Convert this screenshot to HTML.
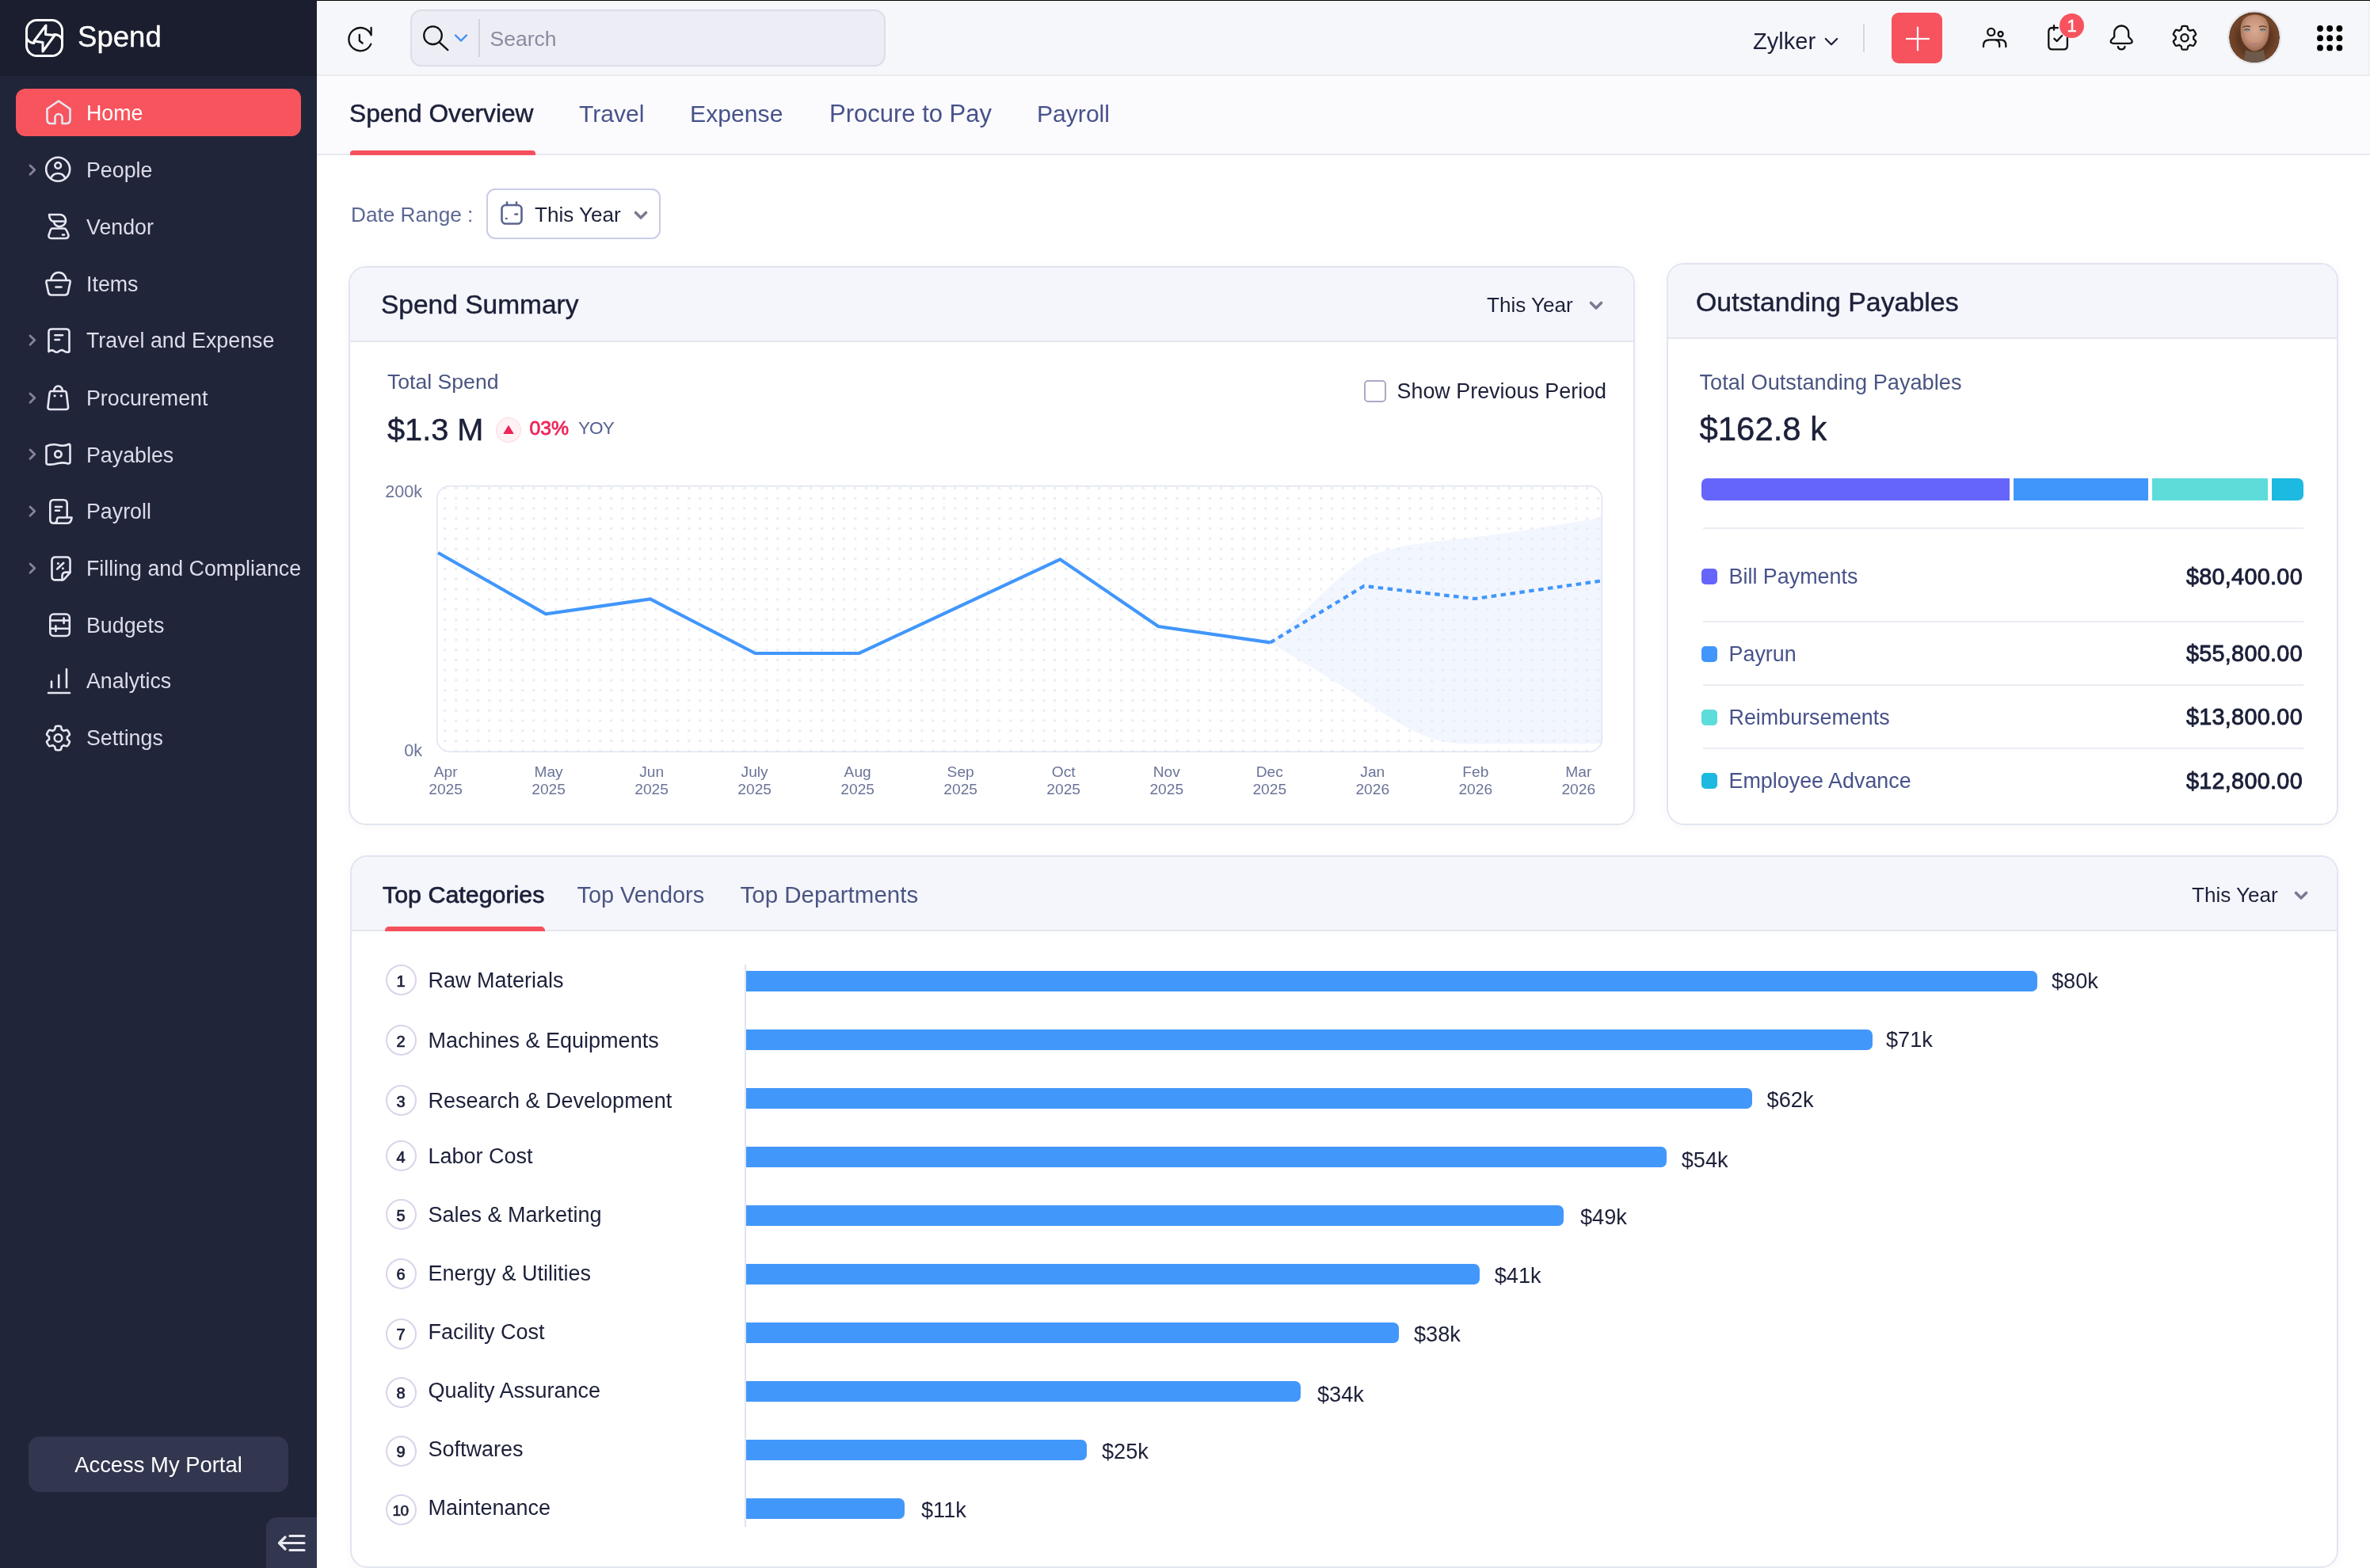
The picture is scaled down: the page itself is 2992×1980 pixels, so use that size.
<!DOCTYPE html><html><head><meta charset="utf-8"><style>
html,body{margin:0;padding:0;width:2992px;height:1980px;overflow:hidden;background:#fff;}
body{position:relative;font-family:"Liberation Sans",sans-serif;}
.a{position:absolute;box-sizing:border-box;}
.t{position:absolute;white-space:nowrap;line-height:1;}
#root{position:absolute;left:0;top:0;width:2992px;height:1980px;overflow:hidden;will-change:transform;}
.m{-webkit-text-stroke:0.6px currentColor;}
</style></head><body><div id="root">
<div class="a" style="left:400px;top:0px;width:2592px;height:96px;background:#f6f7fb;"></div>
<div class="a" style="left:400px;top:0px;width:2592px;height:1px;background:#000;"></div>
<div class="a" style="left:400px;top:1px;width:2592px;height:1px;background:#fff;"></div>
<div class="a" style="left:400px;top:1px;width:1px;height:93px;background:#fff;"></div>
<div class="a" style="left:400px;top:94px;width:2592px;height:2px;background:#ebebed;"></div>
<div class="a" style="left:2990px;top:1px;width:1px;height:93px;background:#ececee;"></div>
<div class="a" style="left:400px;top:96px;width:2592px;height:100px;background:#fbfbfe;"></div>
<div class="a" style="left:400px;top:194px;width:2592px;height:2px;background:#e8e8f3;"></div>
<div class="a" style="left:0px;top:0px;width:400px;height:96px;background:#1b1e2f;"></div>
<div class="a" style="left:0px;top:96px;width:400px;height:1884px;background:#212539;"></div>
<svg class="a" style="left:30px;top:22px;" width="52" height="52" viewBox="0 0 52 52"><g fill="none" stroke="#fff" stroke-width="3" stroke-linejoin="round" stroke-linecap="round">
<rect x="3.5" y="3.5" width="45" height="45" rx="13"/>
<path d="M28 10 L13 30 L24 31.5 L24 43 L39 22.5 L27.5 21.5 Z"/>
<path d="M4.5 27.5 Q7 32 13 32.5"/><path d="M38.5 21.5 Q46 22 48 27"/>
</g></svg>
<div class="t" style="left:98.00px;top:29.32px;font-size:36.6px;color:#ffffff;-webkit-text-stroke:0.35px #fff;">Spend</div>
<div class="a" style="left:20px;top:112px;width:360px;height:60px;background:#f7545e;border-radius:12px;"></div>
<div class="t" style="left:109.00px;top:129.51px;font-size:26.8px;color:#ffffff;">Home</div>
<div class="t" style="left:109.00px;top:202.11px;font-size:26.8px;color:#dcdcea;">People</div>
<svg class="a" style="left:33px;top:204.8px;" width="16" height="20" viewBox="0 0 16 20"><path d="M5 4 L10.8 9.6 L5 15.2" fill="none" stroke="#86839d" stroke-width="2.8" stroke-linecap="round" stroke-linejoin="round"/></svg>
<div class="t" style="left:109.00px;top:273.91px;font-size:26.8px;color:#dcdcea;">Vendor</div>
<div class="t" style="left:109.00px;top:345.61px;font-size:26.8px;color:#dcdcea;">Items</div>
<div class="t" style="left:109.00px;top:417.31px;font-size:26.8px;color:#dcdcea;">Travel and Expense</div>
<svg class="a" style="left:33px;top:420px;" width="16" height="20" viewBox="0 0 16 20"><path d="M5 4 L10.8 9.6 L5 15.2" fill="none" stroke="#86839d" stroke-width="2.8" stroke-linecap="round" stroke-linejoin="round"/></svg>
<div class="t" style="left:109.00px;top:489.81px;font-size:26.8px;color:#dcdcea;">Procurement</div>
<svg class="a" style="left:33px;top:492.5px;" width="16" height="20" viewBox="0 0 16 20"><path d="M5 4 L10.8 9.6 L5 15.2" fill="none" stroke="#86839d" stroke-width="2.8" stroke-linecap="round" stroke-linejoin="round"/></svg>
<div class="t" style="left:109.00px;top:561.61px;font-size:26.8px;color:#dcdcea;">Payables</div>
<svg class="a" style="left:33px;top:564.3px;" width="16" height="20" viewBox="0 0 16 20"><path d="M5 4 L10.8 9.6 L5 15.2" fill="none" stroke="#86839d" stroke-width="2.8" stroke-linecap="round" stroke-linejoin="round"/></svg>
<div class="t" style="left:109.00px;top:633.31px;font-size:26.8px;color:#dcdcea;">Payroll</div>
<svg class="a" style="left:33px;top:636px;" width="16" height="20" viewBox="0 0 16 20"><path d="M5 4 L10.8 9.6 L5 15.2" fill="none" stroke="#86839d" stroke-width="2.8" stroke-linecap="round" stroke-linejoin="round"/></svg>
<div class="t" style="left:109.00px;top:705.11px;font-size:26.8px;color:#dcdcea;">Filling and Compliance</div>
<svg class="a" style="left:33px;top:707.8px;" width="16" height="20" viewBox="0 0 16 20"><path d="M5 4 L10.8 9.6 L5 15.2" fill="none" stroke="#86839d" stroke-width="2.8" stroke-linecap="round" stroke-linejoin="round"/></svg>
<div class="t" style="left:109.00px;top:776.81px;font-size:26.8px;color:#dcdcea;">Budgets</div>
<div class="t" style="left:109.00px;top:847.01px;font-size:26.8px;color:#dcdcea;">Analytics</div>
<div class="t" style="left:109.00px;top:918.71px;font-size:26.8px;color:#dcdcea;">Settings</div>
<svg class="a" style="left:0;top:0" width="400" height="1000" viewBox="0 0 400 1000"><g fill="none" stroke="#e6e7f2" stroke-width="2.6" stroke-linecap="round" stroke-linejoin="round">
<path d="M59.5 137.5 L74 127.5 L88.5 137.5 V151 Q88.5 156 83.5 156 H78.5 V148.5 A4.5 4.5 0 0 0 69.5 148.5 V156 H64.5 Q59.5 156 59.5 151 Z"/>
<circle cx="73.2" cy="213.8" r="15"/><circle cx="73.2" cy="209" r="3.8"/><path d="M64.5 224.5 A9.5 9 0 0 1 82 224.5"/>
<path d="M62 271 H76 A7.5 7.5 0 0 1 80.5 284 A7.5 7.5 0 0 1 68 280 Q62.5 279 62 271 Z"/><path d="M67.5 279.5 H81"/>
<path d="M66 288.5 H81 Q83 288.5 85 293 L86.5 297 Q86.5 301 82.5 301 H65 Q61 301 61.5 297 L63 293 Q64 288.5 66 288.5 Z"/><path d="M79 296.5 H81"/>
<path d="M64.5 354 A9.5 10 0 0 1 83.5 354"/><path d="M60 354 H87.5 Q89 354 88.5 357 L86 369 Q85.5 372.5 82 372.5 H65 Q61.5 372.5 61 369 L58.5 357 Q58 354 60 354 Z"/><path d="M70.5 362.5 H77.5"/>
<path d="M61.5 444 V419 Q61.5 415.5 65.5 415.5 H83 Q87.5 415.5 87.5 419 V444 Q84 446 80.5 443 Q77.5 441 74.5 443.5 Q71.5 446 68.5 443.5 Q65 441 61.5 444 Z"/><path d="M69.5 423.2 H79"/><path d="M69.5 429 H75"/>
<path d="M68 494 A5.5 6.5 0 0 1 79 494"/><path d="M64.5 494 H82 Q83.5 494 84 497 L86 513.5 Q86.5 517 83 517 H63.5 Q60 517 60.5 513.5 L62.5 497 Q63 494 64.5 494 Z"/>
<path d="M58.5 563.5 Q66 560 73.5 562 Q81 564 86.5 561 Q88.5 560.5 88.5 563 V583 Q88.5 585.5 86 585.5 Q80 583.5 73.5 585 Q66 587 60.5 586.5 Q58.5 586.5 58.5 584 Z"/><circle cx="73.4" cy="573.6" r="4.2"/>
<path d="M84.7 652.5 V636 Q84.7 631.3 80 631.3 H68 Q63.3 631.3 63.3 636 V656 Q63.3 660.7 68 660.7 H85 Q89.8 660.7 90.6 653.5 H74 Q72 653.5 72 656 Q72 660.7 67.5 660.7"/><path d="M70 640 H78"/><path d="M70 644.8 H75"/>
<path d="M79.5 732.4 H70 Q65.5 732.4 65.5 727.9 V708 Q65.5 703.5 70 703.5 H84 Q88.5 703.5 88.5 708 V723.2 L81 731.4 Q80.2 732.4 79 732.4"/><path d="M88.2 722.6 H83.2 Q78.5 722.6 78.5 727.3 V732.2"/><path d="M72.2 718.5 L80.3 710.8"/>
<rect x="63.3" y="775.5" width="24.5" height="27.5" rx="4.5"/><path d="M63.5 783.5 H87.5"/><path d="M63.5 793.8 H87.5"/><path d="M80.6 780.5 V787"/><path d="M70.4 790.5 V797"/>
<path d="M65 860.5 V868"/><path d="M74.2 852.5 V868"/><path d="M84 845 V868"/><path d="M61 875 H88"/>
<circle cx="73.5" cy="932" r="4.8"/>
</g></svg>
<svg class="a" style="left:0;top:0" width="400" height="1000"><g fill="#e6e7f2"><circle cx="69.1" cy="499.8" r="1.6"/><circle cx="77.3" cy="499.8" r="1.6"/><circle cx="73.4" cy="711.6" r="1.5"/><circle cx="79.4" cy="717.7" r="1.5"/></g></svg>
<svg class="a" style="left:0;top:0" width="400" height="1000" viewBox="0 0 400 1000"><g fill="none" stroke="#e6e7f2" stroke-width="2.6" stroke-linecap="round" stroke-linejoin="round"><path d="M73.50 916.80 L74.16 916.81 L74.82 916.86 L75.48 916.93 L76.14 917.03 L76.79 917.16 L77.19 918.21 L77.50 919.30 L77.72 920.40 L77.90 921.38 L78.36 921.58 L78.81 921.80 L79.25 922.04 L79.68 922.30 L80.10 922.58 L80.50 922.88 L81.44 922.54 L82.49 922.19 L83.59 921.91 L84.71 921.73 L85.14 922.23 L85.56 922.75 L85.95 923.28 L86.32 923.83 L86.66 924.40 L86.98 924.98 L87.28 925.58 L87.54 926.18 L87.78 926.80 L88.00 927.43 L87.29 928.31 L86.50 929.12 L85.66 929.86 L84.90 930.50 L84.96 931.00 L84.99 931.50 L85.00 932.00 L84.99 932.50 L84.96 933.00 L84.90 933.50 L85.66 934.14 L86.50 934.88 L87.29 935.69 L88.00 936.57 L87.78 937.20 L87.54 937.82 L87.28 938.42 L86.98 939.02 L86.66 939.60 L86.32 940.17 L85.95 940.72 L85.56 941.25 L85.14 941.77 L84.71 942.27 L83.59 942.09 L82.49 941.81 L81.44 941.46 L80.50 941.12 L80.10 941.42 L79.68 941.70 L79.25 941.96 L78.81 942.20 L78.36 942.42 L77.90 942.62 L77.72 943.60 L77.50 944.70 L77.19 945.79 L76.79 946.84 L76.14 946.97 L75.48 947.07 L74.82 947.14 L74.16 947.19 L73.50 947.20 L72.84 947.19 L72.18 947.14 L71.52 947.07 L70.86 946.97 L70.21 946.84 L69.81 945.79 L69.50 944.70 L69.28 943.60 L69.10 942.62 L68.64 942.42 L68.19 942.20 L67.75 941.96 L67.32 941.70 L66.90 941.42 L66.50 941.12 L65.56 941.46 L64.51 941.81 L63.41 942.09 L62.29 942.27 L61.86 941.77 L61.44 941.25 L61.05 940.72 L60.68 940.17 L60.34 939.60 L60.02 939.02 L59.72 938.42 L59.46 937.82 L59.22 937.20 L59.00 936.57 L59.71 935.69 L60.50 934.88 L61.34 934.14 L62.10 933.50 L62.04 933.00 L62.01 932.50 L62.00 932.00 L62.01 931.50 L62.04 931.00 L62.10 930.50 L61.34 929.86 L60.50 929.12 L59.71 928.31 L59.00 927.43 L59.22 926.80 L59.46 926.18 L59.72 925.58 L60.02 924.98 L60.34 924.40 L60.68 923.83 L61.05 923.28 L61.44 922.75 L61.86 922.23 L62.29 921.73 L63.41 921.91 L64.51 922.19 L65.56 922.54 L66.50 922.88 L66.90 922.58 L67.32 922.30 L67.75 922.04 L68.19 921.80 L68.64 921.58 L69.10 921.38 L69.28 920.40 L69.50 919.30 L69.81 918.21 L70.21 917.16 L70.86 917.03 L71.52 916.93 L72.18 916.86 L72.84 916.81 L73.50 916.80 Z"/></g></svg>
<div class="a" style="left:36px;top:1814px;width:328px;height:70px;background:#33364f;border-radius:14px;"></div>
<div class="t" style="left:94.18px;top:1835.81px;font-size:27.4px;color:#ffffff;">Access My Portal</div>
<div class="a" style="left:336px;top:1916px;width:64px;height:64px;background:#33364f;border-radius:14px 0 0 0;"></div>
<svg class="a" style="left:340px;top:1930px;" width="56" height="40" viewBox="0 0 56 40"><g fill="none" stroke="#e8e8f0" stroke-width="3.2" stroke-linecap="round" stroke-linejoin="round"><path d="M26 9.5 H44"/><path d="M13 18.5 H44"/><path d="M26 27.5 H44"/><path d="M20 11 L12.5 18.5 L20 26"/></g></svg>
<div class="a" style="left:518px;top:12px;width:600px;height:72px;background:#ededf5;border:2px solid #dcdde7;border-radius:14px;"></div>
<svg class="a" style="left:0;top:0" width="700" height="96" viewBox="0 0 700 96"><g fill="none" stroke="#111" stroke-width="2.3" stroke-linecap="round" stroke-linejoin="round"><path d="M468.6 35 V44.4 A14.6 14.6 0 1 0 468.3 55.6"/><path d="M453.8 44 V51.5 L457.6 54.5"/><circle cx="546.5" cy="44.7" r="11.3"/><path d="M555.2 53.8 L565.3 63.2"/></g><path d="M575 44.5 L582 51.5 L589 44.5" fill="none" stroke="#3d8ef8" stroke-width="2.4" stroke-linecap="round" stroke-linejoin="round"/></svg>
<div class="a" style="left:604px;top:24px;width:2px;height:48px;background:#d3d4de;"></div>
<div class="t" style="left:618.50px;top:35.77px;font-size:26.5px;color:#8b8aa0;">Search</div>
<div class="t" style="left:2213.00px;top:37.77px;font-size:29.1px;color:#1c2039;">Zylker</div>
<svg class="a" style="left:2300px;top:44px;" width="24" height="18" viewBox="0 0 24 18"><path d="M4.8 5 L12 12.2 L19.2 5" fill="none" stroke="#1c2039" stroke-width="2.2" stroke-linecap="round" stroke-linejoin="round"/></svg>
<div class="a" style="left:2352px;top:30px;width:2px;height:36px;background:#d6d7df;"></div>
<div class="a" style="left:2388px;top:16px;width:64px;height:64px;background:#f6535e;border-radius:9px;"></div>
<svg class="a" style="left:2388px;top:16px;" width="64" height="64" viewBox="0 0 64 64"><g stroke="#fff" stroke-width="2.2" stroke-linecap="butt"><path d="M33 17.8 V48.2"/><path d="M18 33 H48"/></g></svg>
<svg class="a" style="left:0;top:0" width="2992" height="100" viewBox="0 0 2992 100"><g fill="none" stroke="#111" stroke-width="2.3" stroke-linecap="round" stroke-linejoin="round"><circle cx="2513.7" cy="40.4" r="4.5"/><circle cx="2525.6" cy="43" r="3"/><path d="M2504 59 V57.5 Q2504 50.3 2511.5 50.3 H2526 Q2532.3 50.3 2532.3 57 V59"/><path d="M2520 50.6 Q2524.2 51.5 2524.2 56.5 V59"/><path d="M2593 35.2 H2591 Q2586.3 35.2 2586.3 40 V57.8 Q2586.3 62.4 2591 62.4 H2605.3 Q2609.9 62.4 2609.9 57.8 V48"/><path d="M2593 32.2 V37.8"/><path d="M2590.3 35.2 H2597.8"/><path d="M2593.4 48.8 L2596.7 52 L2603.2 45"/></g></svg>
<div class="a" style="left:2600px;top:16.8px;width:31px;height:31px;border-radius:50%;background:#f6535e;"></div>
<div class="t" style="left:2609.38px;top:22.38px;font-size:22px;color:#fff;-webkit-text-stroke:0.5px #fff;">1</div>
<svg class="a" style="left:0;top:0" width="2992" height="100" viewBox="0 0 2992 100"><g fill="none" stroke="#111" stroke-width="2.3" stroke-linecap="round" stroke-linejoin="round"><path d="M2669.2 46.5 V41.5 A9 9 0 0 1 2687.2 41.5 V46.5 L2690.8 50.3 Q2692.6 52.6 2690.8 54 Q2690 54.8 2688.5 54.8 H2667.9 Q2666.4 54.8 2665.6 54 Q2663.8 52.6 2665.6 50.3 Z"/><path d="M2673.9 58.9 A4.4 4.4 0 0 0 2682.5 58.9"/><path d="M2758.00 32.90 L2758.65 32.91 L2759.30 32.96 L2759.94 33.03 L2760.59 33.13 L2761.22 33.25 L2761.62 34.28 L2761.93 35.34 L2762.15 36.41 L2762.32 37.36 L2762.78 37.56 L2763.22 37.78 L2763.65 38.01 L2764.07 38.27 L2764.48 38.54 L2764.88 38.84 L2765.79 38.51 L2766.82 38.17 L2767.90 37.90 L2768.99 37.73 L2769.41 38.22 L2769.82 38.73 L2770.21 39.25 L2770.57 39.79 L2770.90 40.35 L2771.22 40.92 L2771.50 41.50 L2771.77 42.10 L2772.00 42.70 L2772.21 43.32 L2771.52 44.18 L2770.75 44.97 L2769.94 45.69 L2769.20 46.33 L2769.26 46.82 L2769.29 47.31 L2769.30 47.80 L2769.29 48.29 L2769.26 48.78 L2769.20 49.27 L2769.94 49.91 L2770.75 50.63 L2771.52 51.42 L2772.21 52.28 L2772.00 52.90 L2771.77 53.50 L2771.50 54.10 L2771.22 54.68 L2770.90 55.25 L2770.57 55.81 L2770.21 56.35 L2769.82 56.87 L2769.41 57.38 L2768.99 57.87 L2767.90 57.70 L2766.82 57.43 L2765.79 57.09 L2764.88 56.76 L2764.48 57.06 L2764.07 57.33 L2763.65 57.59 L2763.22 57.82 L2762.78 58.04 L2762.32 58.24 L2762.15 59.19 L2761.93 60.26 L2761.62 61.32 L2761.22 62.35 L2760.59 62.47 L2759.94 62.57 L2759.30 62.64 L2758.65 62.69 L2758.00 62.70 L2757.35 62.69 L2756.70 62.64 L2756.06 62.57 L2755.41 62.47 L2754.78 62.35 L2754.38 61.32 L2754.07 60.26 L2753.85 59.19 L2753.68 58.24 L2753.22 58.04 L2752.78 57.82 L2752.35 57.59 L2751.93 57.33 L2751.52 57.06 L2751.12 56.76 L2750.21 57.09 L2749.18 57.43 L2748.10 57.70 L2747.01 57.87 L2746.59 57.38 L2746.18 56.87 L2745.79 56.35 L2745.43 55.81 L2745.10 55.25 L2744.78 54.68 L2744.50 54.10 L2744.23 53.50 L2744.00 52.90 L2743.79 52.28 L2744.48 51.42 L2745.25 50.63 L2746.06 49.91 L2746.80 49.27 L2746.74 48.78 L2746.71 48.29 L2746.70 47.80 L2746.71 47.31 L2746.74 46.82 L2746.80 46.33 L2746.06 45.69 L2745.25 44.97 L2744.48 44.18 L2743.79 43.32 L2744.00 42.70 L2744.23 42.10 L2744.50 41.50 L2744.78 40.92 L2745.10 40.35 L2745.43 39.79 L2745.79 39.25 L2746.18 38.73 L2746.59 38.22 L2747.01 37.73 L2748.10 37.90 L2749.18 38.17 L2750.21 38.51 L2751.12 38.84 L2751.52 38.54 L2751.93 38.27 L2752.35 38.01 L2752.78 37.78 L2753.22 37.56 L2753.68 37.36 L2753.85 36.41 L2754.07 35.34 L2754.38 34.28 L2754.78 33.25 L2755.41 33.13 L2756.06 33.03 L2756.70 32.96 L2757.35 32.91 L2758.00 32.90 Z"/><circle cx="2758" cy="47.8" r="4.6"/></g></svg>
<svg class="a" style="left:2811px;top:13px" width="70" height="70" viewBox="0 0 70 70"><defs><radialGradient id="sk" cx="50%" cy="42%" r="55%"><stop offset="0" stop-color="#d8ab92"/><stop offset="0.6" stop-color="#c8957b"/><stop offset="1" stop-color="#9f6e56"/></radialGradient><radialGradient id="hr" cx="50%" cy="50%" r="50%"><stop offset="0.55" stop-color="#5b3520"/><stop offset="0.85" stop-color="#74462a"/><stop offset="1" stop-color="#4a2a16"/></radialGradient><clipPath id="cc"><circle cx="35" cy="34.3" r="32"/></clipPath></defs><g clip-path="url(#cc)"><rect width="70" height="70" fill="url(#hr)"/><path d="M21 70 L24 50 Q35 55 47 50 L50 70 Z" fill="#6d5a4b"/><path d="M17.5 25 Q17.5 6 35.5 5.5 Q53.5 6 53.5 25 Q53.5 40 45 47.5 Q39.5 51.5 35.5 51.5 Q31 51.5 26 47 Q17.5 40 17.5 25 Z" fill="url(#sk)"/><path d="M20.5 21.5 Q25 18.8 30 20.8" stroke="#5e3d2c" stroke-width="1.4" fill="none"/><path d="M41 20.8 Q46 18.8 50.5 21.5" stroke="#5e3d2c" stroke-width="1.4" fill="none"/><ellipse cx="25.8" cy="25.3" rx="3.3" ry="1.4" fill="#7d949b"/><ellipse cx="45.6" cy="25.3" rx="3.3" ry="1.4" fill="#7d949b"/><path d="M22 24.8 Q26 22.5 29.5 24.6" stroke="#3a2a24" stroke-width="0.9" fill="none"/><path d="M42 24.6 Q45.5 22.5 49.5 24.8" stroke="#3a2a24" stroke-width="0.9" fill="none"/><ellipse cx="35.6" cy="43.2" rx="6" ry="2.1" fill="#b67f79"/></g><circle cx="35" cy="34.3" r="33" fill="none" stroke="#e3e3e6" stroke-width="2"/></svg>
<svg class="a" style="left:2925px;top:31.5px;" width="34" height="34" viewBox="0 0 34 34"><g fill="#000"><circle cx="4.0" cy="4.0" r="3.9"/><circle cx="4.0" cy="16.2" r="3.9"/><circle cx="4.0" cy="28.4" r="3.9"/><circle cx="16.2" cy="4.0" r="3.9"/><circle cx="16.2" cy="16.2" r="3.9"/><circle cx="16.2" cy="28.4" r="3.9"/><circle cx="28.4" cy="4.0" r="3.9"/><circle cx="28.4" cy="16.2" r="3.9"/><circle cx="28.4" cy="28.4" r="3.9"/></g></svg>
<div class="t" style="left:441.00px;top:127.57px;font-size:31.7px;color:#1c2039;-webkit-text-stroke:0.5px #1c2039;">Spend Overview</div>
<div class="t" style="left:731.00px;top:128.92px;font-size:30.1px;color:#47528a;">Travel</div>
<div class="t" style="left:871.00px;top:128.84px;font-size:30.2px;color:#47528a;">Expense</div>
<div class="t" style="left:1047.00px;top:128.16px;font-size:31.0px;color:#47528a;">Procure to Pay</div>
<div class="t" style="left:1309.00px;top:128.92px;font-size:30.1px;color:#47528a;">Payroll</div>
<div class="a" style="left:442px;top:190px;width:234px;height:6px;background:#f5505b;border-radius:4px 4px 0 0;"></div>
<div class="t" style="left:443.00px;top:257.82px;font-size:26.2px;color:#5c6893;">Date Range :</div>
<div class="a" style="left:614px;top:238px;width:220px;height:64px;background:#fff;border:2px solid #c9cdea;border-radius:11px;"></div>
<svg class="a" style="left:628px;top:250px;" width="36" height="36" viewBox="0 0 36 36"><g fill="none" stroke="#5b6490" stroke-width="2.6" stroke-linecap="round" stroke-linejoin="round"><rect x="5.5" y="9" width="25" height="23.5" rx="5"/><path d="M12 5.5 V9"/><path d="M24 5.5 V9"/><path d="M11 26 H11.5"/><path d="M22.5 20.5 H25"/></g></svg>
<div class="t" style="left:675.00px;top:257.91px;font-size:26.1px;color:#1c2039;">This Year</div>
<svg class="a" style="left:797px;top:262px;" width="24" height="20" viewBox="0 0 24 20"><path d="M5.5 6.5 L12 13 L18.5 6.5" fill="none" stroke="#7b7a92" stroke-width="3.6" stroke-linecap="round" stroke-linejoin="round"/></svg>
<div class="a" style="left:440px;top:336px;width:1624px;height:706px;background:#fff;border:2px solid #e1e5f0;border-radius:22px;box-shadow:0 2px 14px rgba(30,40,90,0.035);"></div>
<div class="a" style="left:442px;top:338px;width:1620px;height:92px;background:#f5f6fc;border-radius:20px 20px 0 0;"></div>
<div class="a" style="left:442px;top:430px;width:1620px;height:2px;background:#e4e6ef;"></div>
<div class="t" style="left:481.00px;top:367.64px;font-size:33.5px;color:#1c2039;-webkit-text-stroke:0.45px #1c2039;">Spend Summary</div>
<div class="t" style="left:1877.00px;top:371.91px;font-size:26.1px;color:#1c2039;">This Year</div>
<svg class="a" style="left:2003px;top:376px;" width="24" height="20" viewBox="0 0 24 20"><path d="M5.5 6.5 L12 13 L18.5 6.5" fill="none" stroke="#7b7a92" stroke-width="3.6" stroke-linecap="round" stroke-linejoin="round"/></svg>
<div class="t" style="left:489.00px;top:469.28px;font-size:26.6px;color:#4a5582;">Total Spend</div>
<div class="t" style="left:489.00px;top:522.89px;font-size:39.7px;color:#1c2039;-webkit-text-stroke:0.5px #1c2039;">$1.3 M</div>
<div class="a" style="left:626px;top:527px;width:32px;height:32px;border-radius:50%;background:#fff2f5;border:1.5px solid #fbd6df;"></div>
<svg class="a" style="left:626px;top:527px;" width="32" height="32" viewBox="0 0 32 32"><path d="M16 10.5 L22 20.5 H10 Z" fill="#ef2559" stroke="#ef2559" stroke-width="1" stroke-linejoin="round"/></svg>
<div class="t" style="left:668.50px;top:528.61px;font-size:24.8px;color:#ef2559;-webkit-text-stroke:0.8px #ef2559;">03%</div>
<div class="t" style="left:730.00px;top:530.47px;font-size:22.6px;color:#56608e;letter-spacing:-1px;">YOY</div>
<div class="a" style="left:1722px;top:480px;width:28px;height:28px;border:2px solid #a9abc6;border-radius:5px;background:#fff;"></div>
<div class="t" style="left:1763.50px;top:481.43px;font-size:26.9px;color:#1c2039;">Show Previous Period</div>
<svg class="a" style="left:0;top:0" width="2100" height="1040" viewBox="0 0 2100 1040"><defs><pattern id="dots" x="554.7" y="610.1" width="14" height="12.76" patternUnits="userSpaceOnUse"><circle cx="7" cy="6.4" r="1.75" fill="#e9ebf3"/></pattern><clipPath id="pc"><rect x="551" y="613" width="1472" height="337" rx="16"/></clipPath></defs><g clip-path="url(#pc)"><path d="M1604 811.4 C1640 780 1690 725 1722 706 C1752 690 1790 686 1856 679 C1930 670 1980 660 2030 652 V939 H1840 C1800 936 1770 916 1730 890 C1690 862 1650 840 1604 811.4 Z" fill="#f2f6fe"/><rect x="551" y="613" width="1472" height="337" fill="url(#dots)"/></g><rect x="551.75" y="613.75" width="1470.5" height="335.5" rx="16" fill="none" stroke="#dfe4f3" stroke-width="1.5"/><polyline points="553,698 689,775.3 821,756.5 953.5,825 1084.5,825 1338.3,706.3 1462.3,791 1603.7,811.4" fill="none" stroke="#4196fb" stroke-width="4.2" stroke-linejoin="miter" stroke-linecap="butt"/><polyline points="1603.7,811.4 1722,740 1862,756 2021,733.6" fill="none" stroke="#4196fb" stroke-width="4.2" stroke-dasharray="6.5 5.5" stroke-linejoin="miter"/></svg>
<div class="t" style="right:2459.00px;top:610.02px;font-size:21.6px;color:#6b7499;">200k</div>
<div class="t" style="right:2459.00px;top:937.32px;font-size:21.6px;color:#6b7499;">0k</div>
<div class="t" style="left:547.66px;top:965.25px;font-size:19.2px;color:#6b7499;">Apr</div>
<div class="t" style="left:541.24px;top:986.95px;font-size:19.2px;color:#6b7499;">2025</div>
<div class="t" style="left:674.48px;top:965.25px;font-size:19.2px;color:#6b7499;">May</div>
<div class="t" style="left:671.26px;top:986.95px;font-size:19.2px;color:#6b7499;">2025</div>
<div class="t" style="left:807.16px;top:965.25px;font-size:19.2px;color:#6b7499;">Jun</div>
<div class="t" style="left:801.28px;top:986.95px;font-size:19.2px;color:#6b7499;">2025</div>
<div class="t" style="left:935.59px;top:965.25px;font-size:19.2px;color:#6b7499;">July</div>
<div class="t" style="left:931.30px;top:986.95px;font-size:19.2px;color:#6b7499;">2025</div>
<div class="t" style="left:1065.60px;top:965.25px;font-size:19.2px;color:#6b7499;">Aug</div>
<div class="t" style="left:1061.32px;top:986.95px;font-size:19.2px;color:#6b7499;">2025</div>
<div class="t" style="left:1195.62px;top:965.25px;font-size:19.2px;color:#6b7499;">Sep</div>
<div class="t" style="left:1191.34px;top:986.95px;font-size:19.2px;color:#6b7499;">2025</div>
<div class="t" style="left:1327.79px;top:965.25px;font-size:19.2px;color:#6b7499;">Oct</div>
<div class="t" style="left:1321.36px;top:986.95px;font-size:19.2px;color:#6b7499;">2025</div>
<div class="t" style="left:1455.67px;top:965.25px;font-size:19.2px;color:#6b7499;">Nov</div>
<div class="t" style="left:1451.38px;top:986.95px;font-size:19.2px;color:#6b7499;">2025</div>
<div class="t" style="left:1585.69px;top:965.25px;font-size:19.2px;color:#6b7499;">Dec</div>
<div class="t" style="left:1581.40px;top:986.95px;font-size:19.2px;color:#6b7499;">2025</div>
<div class="t" style="left:1717.30px;top:965.25px;font-size:19.2px;color:#6b7499;">Jan</div>
<div class="t" style="left:1711.42px;top:986.95px;font-size:19.2px;color:#6b7499;">2026</div>
<div class="t" style="left:1846.26px;top:965.25px;font-size:19.2px;color:#6b7499;">Feb</div>
<div class="t" style="left:1841.44px;top:986.95px;font-size:19.2px;color:#6b7499;">2026</div>
<div class="t" style="left:1976.29px;top:965.25px;font-size:19.2px;color:#6b7499;">Mar</div>
<div class="t" style="left:1971.46px;top:986.95px;font-size:19.2px;color:#6b7499;">2026</div>
<div class="a" style="left:2104px;top:332px;width:848px;height:710px;background:#fff;border:2px solid #e1e5f0;border-radius:22px;box-shadow:0 2px 14px rgba(30,40,90,0.035);"></div>
<div class="a" style="left:2106px;top:334px;width:844px;height:92px;background:#f5f6fc;border-radius:20px 20px 0 0;"></div>
<div class="a" style="left:2106px;top:426px;width:844px;height:2px;background:#e4e6ef;"></div>
<div class="t" style="left:2141.00px;top:364.50px;font-size:33.9px;color:#1c2039;-webkit-text-stroke:0.45px #1c2039;">Outstanding Payables</div>
<div class="t" style="left:2145.50px;top:469.28px;font-size:27.2px;color:#4a5582;">Total Outstanding Payables</div>
<div class="t" style="left:2145.50px;top:521.03px;font-size:41.9px;color:#1c2039;-webkit-text-stroke:0.5px #1c2039;">$162.8 k</div>
<div class="a" style="left:2148px;top:604px;width:389px;height:28px;background:#6565fc;border-radius:7px 0 0 7px;"></div>
<div class="a" style="left:2541.5px;top:604px;width:170.0px;height:28px;background:#4196fb;"></div>
<div class="a" style="left:2716.5px;top:604px;width:146.5px;height:28px;background:#5ddcda;"></div>
<div class="a" style="left:2867.5px;top:604px;width:40.5px;height:28px;background:#1cb9e0;border-radius:0 7px 7px 0;"></div>
<div class="a" style="left:2150px;top:666px;width:758px;height:2px;background:#ebecf3;"></div>
<div class="a" style="left:2150px;top:784px;width:758px;height:2px;background:#ebecf3;"></div>
<div class="a" style="left:2150px;top:864px;width:758px;height:2px;background:#ebecf3;"></div>
<div class="a" style="left:2150px;top:944px;width:758px;height:2px;background:#ebecf3;"></div>
<div class="a" style="left:2148px;top:718px;width:20px;height:20px;background:#6565fc;border-radius:5px;"></div>
<div class="t" style="left:2182.50px;top:715.43px;font-size:26.9px;color:#47528a;">Bill Payments</div>
<div class="t" style="right:85.00px;top:713.82px;font-size:28.8px;color:#1c2039;letter-spacing:0.3px;-webkit-text-stroke:0.9px #1c2039;">$80,400.00</div>
<div class="a" style="left:2148px;top:816px;width:20px;height:20px;background:#4196fb;border-radius:5px;"></div>
<div class="t" style="left:2182.50px;top:813.03px;font-size:26.9px;color:#47528a;">Payrun</div>
<div class="t" style="right:85.00px;top:811.42px;font-size:28.8px;color:#1c2039;letter-spacing:0.3px;-webkit-text-stroke:0.9px #1c2039;">$55,800.00</div>
<div class="a" style="left:2148px;top:896px;width:20px;height:20px;background:#5ddcda;border-radius:5px;"></div>
<div class="t" style="left:2182.50px;top:892.93px;font-size:26.9px;color:#47528a;">Reimbursements</div>
<div class="t" style="right:85.00px;top:891.32px;font-size:28.8px;color:#1c2039;letter-spacing:0.3px;-webkit-text-stroke:0.9px #1c2039;">$13,800.00</div>
<div class="a" style="left:2148px;top:976px;width:20px;height:20px;background:#1cb9e0;border-radius:5px;"></div>
<div class="t" style="left:2182.50px;top:973.43px;font-size:26.9px;color:#47528a;">Employee Advance</div>
<div class="t" style="right:85.00px;top:971.82px;font-size:28.8px;color:#1c2039;letter-spacing:0.3px;-webkit-text-stroke:0.9px #1c2039;">$12,800.00</div>
<div class="a" style="left:442px;top:1080px;width:2510px;height:900px;background:#fff;border:2px solid #e1e5f0;border-radius:22px;box-shadow:0 2px 14px rgba(30,40,90,0.035);"></div>
<div class="a" style="left:444px;top:1082px;width:2506px;height:92px;background:#f5f6fc;border-radius:20px 20px 0 0;"></div>
<div class="a" style="left:444px;top:1174px;width:2506px;height:2px;background:#e4e6ef;"></div>
<div class="t" style="left:483.00px;top:1114.27px;font-size:30.4px;color:#1c2039;-webkit-text-stroke:0.75px #1c2039;">Top Categories</div>
<div class="t" style="left:728.50px;top:1115.74px;font-size:28.9px;color:#4a5582;">Top Vendors</div>
<div class="t" style="left:934.50px;top:1115.23px;font-size:29.5px;color:#4a5582;">Top Departments</div>
<div class="a" style="left:486px;top:1170px;width:202px;height:6px;background:#f5505b;border-radius:5px 5px 0 0;"></div>
<div class="t" style="left:2767.00px;top:1116.51px;font-size:26.1px;color:#1c2039;">This Year</div>
<svg class="a" style="left:2893px;top:1121px;" width="24" height="20" viewBox="0 0 24 20"><path d="M5.5 6.5 L12 13 L18.5 6.5" fill="none" stroke="#7b7a92" stroke-width="3.6" stroke-linecap="round" stroke-linejoin="round"/></svg>
<div class="a" style="left:940px;top:1218px;width:2px;height:710px;background:#e0e3ef;"></div>
<div class="a" style="left:942px;top:1226px;width:1630px;height:26px;background:#4297fb;border-radius:0 7px 7px 0;"></div>
<div class="t" style="left:2590.00px;top:1224.98px;font-size:27.2px;color:#1c2039;">$80k</div>
<div class="a" style="left:486.5px;top:1218.4px;width:39px;height:39px;border-radius:50%;border:2px solid #d8d5ea;background:#fff;"></div>
<div class="t" style="left:500.44px;top:1228.77px;font-size:20px;color:#1c2039;-webkit-text-stroke:0.7px #1c2039;">1</div>
<div class="t" style="left:540.50px;top:1225.04px;font-size:27px;color:#1c2039;">Raw Materials</div>
<div class="a" style="left:942px;top:1300px;width:1422px;height:26px;background:#4297fb;border-radius:0 7px 7px 0;"></div>
<div class="t" style="left:2381.00px;top:1299.48px;font-size:27.2px;color:#1c2039;">$71k</div>
<div class="a" style="left:486.5px;top:1294.4px;width:39px;height:39px;border-radius:50%;border:2px solid #d8d5ea;background:#fff;"></div>
<div class="t" style="left:500.44px;top:1304.77px;font-size:20px;color:#1c2039;-webkit-text-stroke:0.7px #1c2039;">2</div>
<div class="t" style="left:540.50px;top:1301.04px;font-size:27px;color:#1c2039;">Machines &amp; Equipments</div>
<div class="a" style="left:942px;top:1374px;width:1270px;height:26px;background:#4297fb;border-radius:0 7px 7px 0;"></div>
<div class="t" style="left:2230.60px;top:1375.48px;font-size:27.2px;color:#1c2039;">$62k</div>
<div class="a" style="left:486.5px;top:1370.3px;width:39px;height:39px;border-radius:50%;border:2px solid #d8d5ea;background:#fff;"></div>
<div class="t" style="left:500.44px;top:1380.67px;font-size:20px;color:#1c2039;-webkit-text-stroke:0.7px #1c2039;">3</div>
<div class="t" style="left:540.50px;top:1376.94px;font-size:27px;color:#1c2039;">Research &amp; Development</div>
<div class="a" style="left:942px;top:1448px;width:1162px;height:26px;background:#4297fb;border-radius:0 7px 7px 0;"></div>
<div class="t" style="left:2122.70px;top:1451.18px;font-size:27.2px;color:#1c2039;">$54k</div>
<div class="a" style="left:486.5px;top:1440.3px;width:39px;height:39px;border-radius:50%;border:2px solid #d8d5ea;background:#fff;"></div>
<div class="t" style="left:500.44px;top:1450.67px;font-size:20px;color:#1c2039;-webkit-text-stroke:0.7px #1c2039;">4</div>
<div class="t" style="left:540.50px;top:1446.94px;font-size:27px;color:#1c2039;">Labor Cost</div>
<div class="a" style="left:942px;top:1522px;width:1032px;height:26px;background:#4297fb;border-radius:0 7px 7px 0;"></div>
<div class="t" style="left:1995.00px;top:1522.98px;font-size:27.2px;color:#1c2039;">$49k</div>
<div class="a" style="left:486.5px;top:1514.2px;width:39px;height:39px;border-radius:50%;border:2px solid #d8d5ea;background:#fff;"></div>
<div class="t" style="left:500.44px;top:1524.57px;font-size:20px;color:#1c2039;-webkit-text-stroke:0.7px #1c2039;">5</div>
<div class="t" style="left:540.50px;top:1520.84px;font-size:27px;color:#1c2039;">Sales &amp; Marketing</div>
<div class="a" style="left:942px;top:1596px;width:926px;height:26px;background:#4297fb;border-radius:0 7px 7px 0;"></div>
<div class="t" style="left:1886.70px;top:1596.98px;font-size:27.2px;color:#1c2039;">$41k</div>
<div class="a" style="left:486.5px;top:1588.5px;width:39px;height:39px;border-radius:50%;border:2px solid #d8d5ea;background:#fff;"></div>
<div class="t" style="left:500.44px;top:1598.87px;font-size:20px;color:#1c2039;-webkit-text-stroke:0.7px #1c2039;">6</div>
<div class="t" style="left:540.50px;top:1595.14px;font-size:27px;color:#1c2039;">Energy &amp; Utilities</div>
<div class="a" style="left:942px;top:1670px;width:824px;height:26px;background:#4297fb;border-radius:0 7px 7px 0;"></div>
<div class="t" style="left:1785.00px;top:1670.98px;font-size:27.2px;color:#1c2039;">$38k</div>
<div class="a" style="left:486.5px;top:1664.5px;width:39px;height:39px;border-radius:50%;border:2px solid #d8d5ea;background:#fff;"></div>
<div class="t" style="left:500.44px;top:1674.87px;font-size:20px;color:#1c2039;-webkit-text-stroke:0.7px #1c2039;">7</div>
<div class="t" style="left:540.50px;top:1669.14px;font-size:27px;color:#1c2039;">Facility Cost</div>
<div class="a" style="left:942px;top:1744px;width:700px;height:26px;background:#4297fb;border-radius:0 7px 7px 0;"></div>
<div class="t" style="left:1663.00px;top:1746.98px;font-size:27.2px;color:#1c2039;">$34k</div>
<div class="a" style="left:486.5px;top:1738.5px;width:39px;height:39px;border-radius:50%;border:2px solid #d8d5ea;background:#fff;"></div>
<div class="t" style="left:500.44px;top:1748.87px;font-size:20px;color:#1c2039;-webkit-text-stroke:0.7px #1c2039;">8</div>
<div class="t" style="left:540.50px;top:1743.14px;font-size:27px;color:#1c2039;">Quality Assurance</div>
<div class="a" style="left:942px;top:1818px;width:430px;height:26px;background:#4297fb;border-radius:0 7px 7px 0;"></div>
<div class="t" style="left:1391.00px;top:1818.98px;font-size:27.2px;color:#1c2039;">$25k</div>
<div class="a" style="left:486.5px;top:1812.5px;width:39px;height:39px;border-radius:50%;border:2px solid #d8d5ea;background:#fff;"></div>
<div class="t" style="left:500.44px;top:1822.87px;font-size:20px;color:#1c2039;-webkit-text-stroke:0.7px #1c2039;">9</div>
<div class="t" style="left:540.50px;top:1817.14px;font-size:27px;color:#1c2039;">Softwares</div>
<div class="a" style="left:942px;top:1892px;width:200px;height:26px;background:#4297fb;border-radius:0 7px 7px 0;"></div>
<div class="t" style="left:1163.00px;top:1892.98px;font-size:27.2px;color:#1c2039;">$11k</div>
<div class="a" style="left:486.5px;top:1886.5px;width:39px;height:39px;border-radius:50%;border:2px solid #d8d5ea;background:#fff;"></div>
<div class="t" style="left:495.43px;top:1897.72px;font-size:19px;color:#1c2039;-webkit-text-stroke:0.7px #1c2039;letter-spacing:-0.5px;">10</div>
<div class="t" style="left:540.50px;top:1891.14px;font-size:27px;color:#1c2039;">Maintenance</div>
</div></body></html>
